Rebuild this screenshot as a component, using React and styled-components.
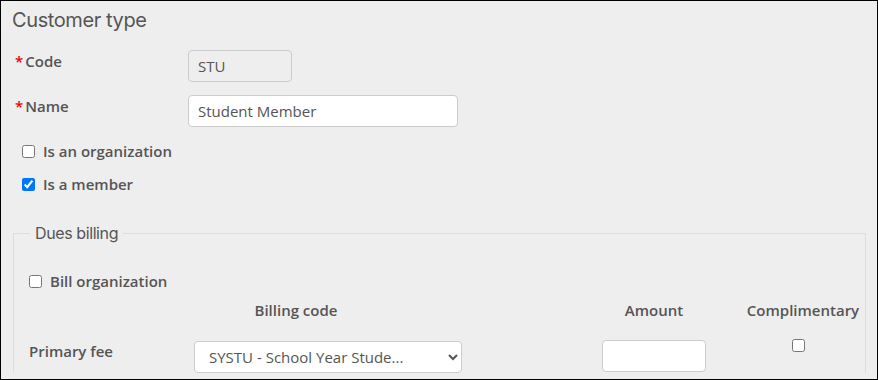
import React from "react";
import styled, { createGlobalStyle } from "styled-components";

const Global = createGlobalStyle`
  html, body { margin: 0; padding: 0; background: #eeeeee; }
  body { font-family: "Open Sans", "Liberation Sans", sans-serif; }
  * { box-sizing: border-box; }
`;

const Page = styled.div`
  width: 878px;
  height: 380px;
  border: 1px solid #000;
  background: #eeeeee;
  overflow: hidden;
  color: #555;
  font-family: "Open Sans", "Liberation Sans", sans-serif;
`;

const Title = styled.h1`
  margin: 7px 0 0 11px;
  font-family: "Inter", "Liberation Sans", sans-serif;
  font-weight: 400;
  font-size: 20px;
  line-height: 24px;
  letter-spacing: -0.4px;
  color: #555;
`;

const Body = styled.div`
  margin-top: 18px;
  padding-left: 14px;
  display: flex;
  flex-direction: column;
  gap: 13px;
`;

const FieldRow = styled.div`
  display: grid;
  grid-template-columns: 173px auto;
  align-items: start;
`;

const Label = styled.label`
  display: block;
  margin-top: 1px;
  font-size: 15px;
  line-height: 20px;
  font-weight: 600;
  color: #555;
`;

const Star = styled.span`
  color: #e00;
  margin-right: 2px;
  font-weight: 600;
`;

const TextInput = styled.input`
  height: 32px;
  width: ${(p) => p.$w}px;
  border: 1px solid #ccc;
  border-radius: 4px;
  background: ${(p) => (p.disabled ? "#eeeeee" : "#fff")};
  padding: 0 9px;
  font-family: "Open Sans", "Liberation Sans", sans-serif;
  font-size: 15px;
  color: #555;
  margin: 0;
  outline: none;
`;

const CheckGroup = styled.div`
  margin-top: 1px;
  display: flex;
  flex-direction: column;
  gap: 13px;
`;

const CheckRow = styled.label`
  display: flex;
  align-items: center;
  gap: 8px;
  height: 20px;
  padding-left: ${(p) => p.$indent || 0}px;
  font-size: 15px;
  font-weight: 600;
  line-height: 20px;
  color: #555;
`;

const Box = styled.input`
  margin: 0;
  width: 13px;
  height: 13px;
`;

const Fieldset = styled.fieldset`
  margin: 28px 0 0 12px;
  width: 853px;
  border: 1px solid #ddd;
  border-bottom: none;
  padding: 0 0 0 15px;
  min-width: 0;
`;

const Legend = styled.legend`
  margin-left: 1px;
  padding: 0 5px;
  font-family: "Inter", "Liberation Sans", sans-serif;
  font-size: 16px;
  line-height: 22px;
  letter-spacing: -0.4px;
  color: #555;
`;

const BillRow = styled.div`
  margin-top: 27px;
`;

const FeeGrid = styled.div`
  margin-top: 9px;
  display: grid;
  grid-template-columns: 165px 408px 144px 114px;
  row-gap: 19px;
  align-items: start;
`;

const Head = styled.div`
  font-size: 15px;
  font-weight: 600;
  line-height: 20px;
  color: #555;
  text-align: center;
  width: ${(p) => p.$w}px;
  white-space: nowrap;
`;

const FeeLabel = styled.div`
  margin-top: 2px;
  font-size: 15px;
  font-weight: 600;
  line-height: 20px;
`;

const Select = styled.select`
  margin-top: 2px;
  width: 268px;
  height: 32px;
  border: 1px solid #ccc;
  border-radius: 4px;
  background: #fff;
  padding: 0 8px 0 10px;
  font-family: "Open Sans", "Liberation Sans", sans-serif;
  font-size: 15px;
  color: #555;
  outline: none;
`;

const AmountInput = styled(TextInput)`
  margin-top: 1px;
`;

const CompCell = styled.div`
  display: flex;
  justify-content: center;
  padding-right: 10px;
`;

export default function App() {
  return (
    <>
      <Global />
      <Page>
        <Title>Customer type</Title>
        <Body>
          <FieldRow>
            <Label>
              <Star>*</Star>Code
            </Label>
            <TextInput $w={104} disabled defaultValue="STU" />
          </FieldRow>
          <FieldRow>
            <Label>
              <Star>*</Star>Name
            </Label>
            <TextInput $w={270} defaultValue="Student Member" />
          </FieldRow>
          <CheckGroup>
            <CheckRow $indent={7}>
              <Box type="checkbox" />
              Is an organization
            </CheckRow>
            <CheckRow $indent={7}>
              <Box type="checkbox" defaultChecked />
              Is a member
            </CheckRow>
          </CheckGroup>
        </Body>
        <Fieldset>
          <Legend>Dues billing</Legend>
          <BillRow>
            <CheckRow>
              <Box type="checkbox" />
              Bill organization
            </CheckRow>
          </BillRow>
          <FeeGrid>
            <div />
            <Head $w={204}>Billing code</Head>
            <Head $w={104}>Amount</Head>
            <Head $w={114}>Complimentary</Head>
            <FeeLabel>Primary fee</FeeLabel>
            <div>
              <Select defaultValue="SYSTU">
                <option value="SYSTU">SYSTU - School Year Stude...</option>
              </Select>
            </div>
            <div>
              <AmountInput $w={104} />
            </div>
            <CompCell>
              <Box type="checkbox" />
            </CompCell>
          </FeeGrid>
        </Fieldset>
      </Page>
    </>
  );
}
